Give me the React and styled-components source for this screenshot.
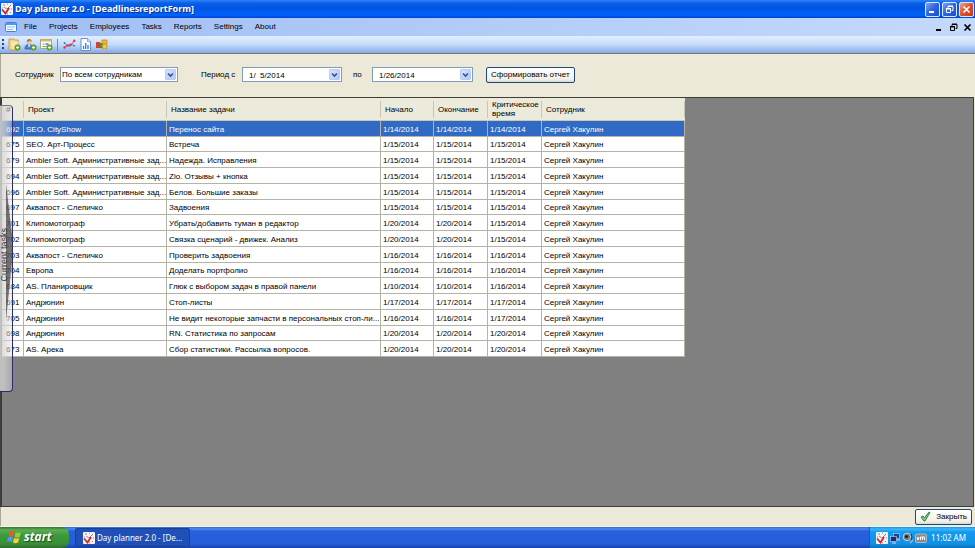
import React from "react";
import styled, { createGlobalStyle } from "styled-components";

const Global = createGlobalStyle`
  * { box-sizing: border-box; }
  html, body, #root { height: 100%; }
  body { margin: 0; overflow: hidden; }
  button, input, select { font: inherit; color: inherit; margin: 0; }
  svg { display: block; flex: none; }
`;

const Desktop = styled.div`
  position: relative;
  display: flex;
  flex-direction: column;
  height: 100%;
  font: 8px/12px "Liberation Sans", Arial, sans-serif;
  color: #000;
  background: #ece9d8;
`;

const TitleBar = styled.header`
  display: flex;
  align-items: center;
  gap: 2px;
  height: 18px;
  padding: 0 1px;
  background: linear-gradient(#2f86f8 0, #0a5fe8 3px, #0054e3 8px, #0062fb 15px, #0043d0 18px);
`;

const Title = styled.h1`
  flex: 1;
  margin: 0;
  color: #fff;
  font: bold 9px/16px "Noto Sans", "Open Sans", sans-serif;
  text-shadow: 1px 1px #0a2f8c;
`;

const WindowButton = styled.button`
  display: grid;
  place-items: center;
  width: 15px;
  height: 15px;
  padding: 0;
  border: 1px solid #dbe7ff;
  border-radius: 2px;
  background: ${(p) =>
    p.$close
      ? "linear-gradient(135deg, #f0a084, #e0502a 50%, #c83c14)"
      : "linear-gradient(135deg, #7ba2f2, #2f63de 50%, #1c4fcc)"};
`;

const ButtonSet = styled.div`
  display: flex;
  gap: ${(p) => p.$gap}px;
`;

const MenuBar = styled.nav`
  display: flex;
  align-items: center;
  height: 18px;
  padding: 0 3px 0 5px;
  background: linear-gradient(90deg, #a0bef5, #c4dafb);
`;

const MenuList = styled.div`
  display: flex;
  flex: 1;
  gap: 12px;
  padding-left: 7px;
`;

const MenuItem = styled.button`
  padding: 0;
  border: 0;
  background: none;
`;

const MdiButton = styled.button`
  display: grid;
  place-items: center;
  width: 9px;
  height: 12px;
  padding: 0;
  border: 0;
  background: none;
`;

const ToolBar = styled.div`
  display: flex;
  align-items: center;
  gap: 2px;
  height: 18px;
  padding: 0 2px;
  border-bottom: 1px solid #77766c;
  background: linear-gradient(#e3efff, #c5dcfb 50%, #84a9e4);
`;

const ToolButton = styled.button`
  display: grid;
  place-items: center;
  width: 14px;
  height: 14px;
  padding: 0;
  border: 0;
  background: none;
`;

const Grip = styled.span`
  width: 2px;
  height: 11px;
  margin-right: 1px;
  background: repeating-linear-gradient(#27418f 0 2px, transparent 2px 4px);
`;

const Separator = styled.span`
  width: 1px;
  height: 12px;
  margin: 0 2px;
  background: #6a8ccb;
`;

const Filters = styled.form`
  display: flex;
  align-items: center;
  height: 43px;
  padding: 0 15px 2px 14px;
  border-left: 1px solid #aaa79a;
`;

const FilterLabel = styled.label`
  width: ${(p) => p.$width}px;
  margin-left: ${(p) => p.$before}px;
  white-space: nowrap;
`;

const Field = styled.div`
  display: flex;
  align-items: center;
  width: ${(p) => p.$width}px;
  height: 15px;
  padding-right: 1px;
  border: 1px solid #7f9db9;
  background: #fff;
`;

const SelectInput = styled.select`
  flex: 1;
  min-width: 0;
  height: 13px;
  padding: 0 1px;
  border: 0;
  outline: 0;
  appearance: none;
  background: none;
`;

const DateInput = styled.input`
  flex: 1;
  min-width: 0;
  height: 13px;
  padding: 1px 0 0 6px;
  border: 0;
  outline: 0;
  background: none;
`;

const DropButton = styled.button`
  display: grid;
  place-items: center;
  width: 11px;
  height: 11px;
  padding: 0;
  border: 1px solid #b8cbf6;
  border-radius: 1px;
  background: linear-gradient(135deg, #d6e2fd, #b4c8f6);
`;

const PushButton = styled.button`
  display: flex;
  align-items: center;
  justify-content: center;
  gap: 5px;
  height: 16px;
  margin-left: ${(p) => p.$before || 0}px;
  padding: 0 4px;
  border: 1px solid #1c4a7c;
  border-radius: 2px;
  background: linear-gradient(#fff, #f1f0ea 80%, #dcd8cc);
`;

const Workspace = styled.main`
  flex: 1;
  min-height: 0;
  margin-right: 1px;
  overflow: hidden;
  border: solid #3f3d36;
  border-width: 1px 1px 1px 2px;
  background: #808080;
`;

const Grid = styled.table`
  width: 683px;
  border-collapse: separate;
  border-spacing: 0;
  table-layout: fixed;
  background: #fff;
`;

const Col = styled.col`
  width: ${(p) => p.$width}px;
`;

const HeadCell = styled.th`
  height: 23px;
  padding: 0 0 0 4px;
  border-bottom: 1px solid #cbc7b8;
  background: linear-gradient(#c9c6b8, #c9c6b8) right center / 1px 17px no-repeat #ebeadb;
  font-weight: normal;
  line-height: 9px;
  text-align: left;
`;

const Row = styled.tr`
  height: 16px;
  color: ${(p) => (p.$selected ? "#fff" : "inherit")};
  background: ${(p) => (p.$selected ? "#316ac5" : "#fff")};

  &:nth-child(4n + 2) {
    height: 15px;
  }
`;

const Cell = styled.td`
  padding: 1px 0 0 2px;
  border: solid #b5b3a4;
  border-width: 0 1px 1px 0;
  line-height: 13px;
  white-space: nowrap;

  &:first-child {
    padding-left: 4px;
  }
`;

const Footer = styled.footer`
  display: flex;
  align-items: center;
  justify-content: flex-end;
  height: 19px;
  padding-right: 3px;
  border-left: 1px solid #aaa79a;
`;

const SideTab = styled.button`
  position: absolute;
  top: 105px;
  left: 0;
  display: flex;
  align-items: center;
  width: 13px;
  height: 287px;
  padding: 12px 0 0;
  border: 1px solid #2c2c6c;
  border-left: 0;
  border-top-color: #77777c;
  border-radius: 0 4px 4px 0;
  background: linear-gradient(90deg, #d2d2d2e6, #e4e4e466);
`;

const SideLabel = styled.span`
  writing-mode: vertical-rl;
  transform: rotate(180deg);
  color: #333;
  font: 9px/9px "Liberation Sans", sans-serif;
`;

const Taskbar = styled.div`
  display: flex;
  align-items: stretch;
  height: 22px;
  border-top: 1px solid #f5f3ea;
  background: linear-gradient(#3168d5, #4a8bf0 2px, #2660dc 4px, #245edb 17px, #1941a5);
`;

const StartButton = styled.button`
  display: flex;
  align-items: center;
  gap: 2px;
  width: 69px;
  padding: 0 0 1px 7px;
  border: 0;
  border-radius: 0 7px 7px 0;
  color: #fff;
  font: italic bold 12px/16px "Open Sans", "Noto Sans", sans-serif;
  text-shadow: 1px 1px 1px #1a4a1a;
  background: linear-gradient(#2f7a2f, #5eac56 3px, #3c9a3c 8px, #388e38 17px, #2a6d2a);
`;

const TaskButton = styled.button`
  display: flex;
  align-items: center;
  gap: 2px;
  width: 115px;
  margin: 1px 0 1px 6px;
  padding: 0 7px;
  border: 1px solid #15409c;
  border-radius: 2px;
  color: #fff;
  font: 8px/12px "Noto Sans", sans-serif;
  white-space: nowrap;
  background: #1e50b8;
`;

const Tray = styled.div`
  display: flex;
  align-items: center;
  gap: 1px;
  margin-left: auto;
  padding: 0 9px 0 6px;
  border-left: 1px solid #0d5fb5;
  color: #fff;
  font: 8px/12px "Noto Sans", sans-serif;
  background: linear-gradient(#1290e9, #3db8f8 2px, #139aee 5px, #1190e4 17px, #0d6fb8);
`;

const Clock = styled.time`
  margin-left: 3px;
`;

function AppLogo({ size = 12 }) {
  return (
    <svg width={size} height={size} viewBox="0 0 12 12">
      <rect width="12" height="12" rx="1" fill="#f4f4f6" />
      <path d="M2 2h2M6 1h1M9 2l1 1M1 5h1M10 6h1M9 9l1 1M6 11h1" stroke="#888" />
      <path d="M6 6 10 2M6 6 3 4" stroke="#777" strokeWidth=".8" />
      <path d="M1 6.500 4.500 10.500 8 5" fill="none" stroke="#e01c1c" strokeWidth="1.700" />
    </svg>
  );
}

function FormIcon() {
  return (
    <svg width="12" height="12" viewBox="0 0 12 12">
      <rect x=".5" y="1.500" width="11" height="9" rx="1" fill="#f8fbff" stroke="#3b81dd" />
      <path d="M1 3h10" stroke="#4b9af0" strokeWidth="2" />
      <path d="M2 6h8M2 8.500h6" stroke="#8fb6e8" />
    </svg>
  );
}

function AddBadge() {
  return (
    <g>
      <circle cx="9.500" cy="9.500" r="2.700" fill="#6cab25" stroke="#4b841a" strokeWidth=".6" />
      <path d="M8 9.500h3M9.500 8v3" stroke="#fff" strokeWidth="1.100" />
    </g>
  );
}

function ToolIcon({ kind }) {
  return (
    <svg width="13" height="13" viewBox="0 0 13 13">
      {kind === "project" && (
        <>
          <path d="M1 1h5l1 1h3v10H2L1 11z" fill="#f5d185" stroke="#c59438" strokeWidth=".8" />
          <path d="M3 3.500h7V11H4z" fill="#fae5ac" />
          <AddBadge />
        </>
      )}
      {kind === "employee" && (
        <>
          <path d="M1 11c0-4 2-4.500 4-4.500S9 7 9 11z" fill="#4b86d2" stroke="#2c5a9c" strokeWidth=".7" />
          <path d="M4 6.500h2.500L5 9.500z" fill="#fff" />
          <circle cx="5.300" cy="4" r="2.300" fill="#f1c48d" />
          <path d="M2.800 4C2.500 0 8 0 7.800 4L6.500 2.500z" fill="#a36f2c" />
          <AddBadge />
        </>
      )}
      {kind === "task" && (
        <>
          <rect x=".5" y="1.500" width="11" height="9" fill="#fbfbf5" stroke="#a7a78d" />
          <path d="M1 2.500h10" stroke="#e3b75a" strokeWidth="2" />
          <path d="M2.500 6h2M2.500 8.500h4" stroke="#7eae55" />
          <path d="M5.500 6h3" stroke="#69a2dd" strokeWidth="2" />
          <AddBadge />
        </>
      )}
      {kind === "lines" && (
        <>
          <path d="m1 4 3 4 3-2 5 2" fill="none" stroke="#6485c4" />
          <path d="m1 10 3-2.500L7 8l5-6" fill="none" stroke="#d9363c" strokeWidth="1" />
          <g fill="#df3c42">
            <circle cx="1.500" cy="9.500" r="1.200" />
            <circle cx="4.500" cy="7.500" r="1.200" />
            <circle cx="7.500" cy="7" r="1.200" />
            <circle cx="11.300" cy="2.700" r="1.200" />
          </g>
          <g fill="#4a74c2">
            <circle cx="1.500" cy="5" r=".9" />
            <circle cx="11" cy="7.600" r=".9" />
          </g>
        </>
      )}
      {kind === "bars" && (
        <>
          <path d="M2 .5h6.500l3 3v9H2z" fill="#f8fbff" stroke="#6c91c8" />
          <path d="M8.500.5v3h3" fill="#d7e6fa" stroke="#6c91c8" strokeWidth=".7" />
          <path d="M4.500 11V8M6.700 11V5M9 11V7" stroke="#3c7bd0" strokeWidth="1.300" />
        </>
      )}
      {kind === "parts" && (
        <>
          <path d="M1 4h4v6H1z" fill="#d8402b" />
          <path d="M5 5h3v5H5z" fill="#43923a" />
          <path d="M7 2h5v4H7z" fill="#f3b92d" stroke="#b7801b" strokeWidth=".7" />
          <path d="m9.500 5.500 1 1.800 2 .2-1.400 1.500.400 2.200-2-1-2 1 .4-2.200L6.500 7.500l2-.2z" fill="#ffd04a" stroke="#d78d14" strokeWidth=".8" />
        </>
      )}
    </svg>
  );
}

function Glyph({ kind, color = "#fff" }) {
  return (
    <svg width="9" height="9" viewBox="0 0 9 9" fill="none" stroke={color}>
      {kind === "min" && <path d="M1 7h5" strokeWidth="2" />}
      {kind === "restore" && (
        <>
          <path d="M3 3V1.500h5V5.500H6.500M3 1h5" />
          <path d="M1.500 4h4v3.500h-4zM1 3.500h5" />
        </>
      )}
      {kind === "close" && <path d="m1.500 1.500 6 6m0-6-6 6" strokeWidth="1.700" />}
    </svg>
  );
}

function Chevron() {
  return (
    <svg width="7" height="6" viewBox="0 0 7 6">
      <path d="M1 1.500 3.500 4 6 1.500" fill="none" stroke="#34528c" strokeWidth="1.600" />
    </svg>
  );
}

function CheckIcon() {
  return (
    <svg width="11" height="11" viewBox="0 0 11 11">
      <path d="m1 6 2-1 1.500 2L9 1l1 .500L5 10H4z" fill="#7cd080" stroke="#237a35" strokeWidth=".9" />
    </svg>
  );
}

function Flag() {
  return (
    <svg width="15" height="14" viewBox="0 0 13 12">
      <path d="M2.500 1.500q2-1.300 4.200 0L5.600 5.500Q3.500 4.300 1.300 5.500z" fill="#f0562a" />
      <path d="M7.500 1.900q2 1.200 4.700 0L11 6q-2.300 1-4.500 0z" fill="#8fd03c" />
      <path d="M1.100 6.300q2.200-1.200 4.200 0l-1.100 4q-2-1.200-4.200 0z" fill="#5a95f5" />
      <path d="M6.200 6.800q2.200 1.200 4.600 0l-1.200 4q-2.200 1.200-4.500 0z" fill="#fccf2c" />
    </svg>
  );
}

function TrayIcon({ kind }) {
  return (
    <svg width="12" height="12" viewBox="0 0 12 12">
      {kind === "network" && (
        <>
          <rect x="4.500" y="1.500" width="6" height="5" fill="#263e93" stroke="#c5d6f5" strokeWidth=".6" />
          <rect x="1.500" y="4.500" width="6" height="5" fill="#1a2d78" stroke="#c5d6f5" strokeWidth=".6" />
          <path d="M3 11h4M8 8h3" stroke="#ccd8f0" />
        </>
      )}
      {kind === "sound" && (
        <>
          <circle cx="5" cy="5" r="3.800" fill="#777" stroke="#d8d8d8" strokeWidth=".9" />
          <circle cx="4.500" cy="4.500" r="1.600" fill="#222" />
          <path d="M9 2q2 3 0 6" fill="none" stroke="#333" />
          <path d="m8 11 3-3" stroke="#8fb9ff" strokeWidth="1.500" />
        </>
      )}
      {kind === "vm" && (
        <>
          <rect x=".5" y="2" width="11" height="8.500" rx="1" fill="#8a8a88" stroke="#ddd" strokeWidth=".6" />
          <path d="m2 5 1 3 1.200-3M5.500 8V5h4v3M7.500 5v3" fill="none" stroke="#fff" />
        </>
      )}
    </svg>
  );
}

const Shade = styled.svg`
  position: absolute;
  top: 78px;
  left: 6px;
`;

const menus = ["File", "Projects", "Employees", "Tasks", "Reports", "Settings", "About"];

const columns = [
  ["#", 22],
  ["Проект", 143],
  ["Название задачи", 214],
  ["Начало", 53],
  ["Окончание", 54],
  ["Критическое время", 54],
  ["Сотрудник", 143],
];

const ambler = "Ambler Soft. Административные зад...";
const tasks = [
  [692, "SEO. CityShow", "Перенос сайта", "1/14/2014", "1/14/2014", "1/14/2014"],
  [675, "SEO. Арт-Процесс", "Встреча", "1/15/2014", "1/15/2014", "1/15/2014"],
  [679, ambler, "Надежда. Исправления", "1/15/2014", "1/15/2014", "1/15/2014"],
  [694, ambler, "Zio. Отзывы + кнопка", "1/15/2014", "1/15/2014", "1/15/2014"],
  [696, ambler, "Белов. Большие заказы", "1/15/2014", "1/15/2014", "1/15/2014"],
  [697, "Аквапост - Слепичко", "Задвоения", "1/15/2014", "1/15/2014", "1/15/2014"],
  [701, "Клипомотограф", "Убрать/добавить туман в редактор", "1/20/2014", "1/20/2014", "1/15/2014"],
  [702, "Клипомотограф", "Связка сценарий - движек. Анализ", "1/20/2014", "1/20/2014", "1/15/2014"],
  [703, "Аквапост - Слепичко", "Проверить задвоения", "1/16/2014", "1/16/2014", "1/16/2014"],
  [704, "Европа", "Доделать портфолио", "1/16/2014", "1/16/2014", "1/16/2014"],
  [684, "AS. Планировщик", "Глюк с выбором задач в правой панели", "1/10/2014", "1/10/2014", "1/16/2014"],
  [691, "Андрюнин", "Стоп-листы", "1/17/2014", "1/17/2014", "1/17/2014"],
  [705, "Андрюнин", "Не видит некоторые запчасти в персональных стоп-ли...", "1/16/2014", "1/16/2014", "1/17/2014"],
  [698, "Андрюнин", "RN. Статистика по запросам", "1/20/2014", "1/20/2014", "1/20/2014"],
  [673, "AS. Арека", "Сбор статистики. Рассылка вопросов.", "1/20/2014", "1/20/2014", "1/20/2014"],
];

function DateField({ id, value, width }) {
  return (
    <Field $width={width}>
      <DateInput id={id} type="text" defaultValue={value} />
      <DropButton type="button" aria-label="Open calendar">
        <Chevron />
      </DropButton>
    </Field>
  );
}

export default function App() {
  return (
    <Desktop>
      <Global />
      <TitleBar>
        <AppLogo />
        <Title>Day planner 2.0 - [DeadlinesreportForm]</Title>
        <ButtonSet $gap={2}>
          <WindowButton aria-label="Minimize"><Glyph kind="min" /></WindowButton>
          <WindowButton aria-label="Restore"><Glyph kind="restore" /></WindowButton>
          <WindowButton $close aria-label="Close"><Glyph kind="close" /></WindowButton>
        </ButtonSet>
      </TitleBar>

      <MenuBar>
        <FormIcon />
        <MenuList>
          {menus.map((name) => <MenuItem key={name}>{name}</MenuItem>)}
        </MenuList>
        <ButtonSet $gap={5}>
          <MdiButton aria-label="Minimize form"><Glyph kind="min" color="#000" /></MdiButton>
          <MdiButton aria-label="Restore form"><Glyph kind="restore" color="#000" /></MdiButton>
          <MdiButton aria-label="Close form"><Glyph kind="close" color="#000" /></MdiButton>
        </ButtonSet>
      </MenuBar>

      <ToolBar>
        <Grip />
        <ToolButton aria-label="Add project"><ToolIcon kind="project" /></ToolButton>
        <ToolButton aria-label="Add employee"><ToolIcon kind="employee" /></ToolButton>
        <ToolButton aria-label="Add task"><ToolIcon kind="task" /></ToolButton>
        <Separator />
        <ToolButton aria-label="Line report"><ToolIcon kind="lines" /></ToolButton>
        <ToolButton aria-label="Bar report"><ToolIcon kind="bars" /></ToolButton>
        <ToolButton aria-label="Summary report"><ToolIcon kind="parts" /></ToolButton>
      </ToolBar>

      <Filters onSubmit={(e) => e.preventDefault()}>
        <FilterLabel htmlFor="employee" $before={0} $width={45}>Сотрудник</FilterLabel>
        <Field $width={118}>
          <SelectInput id="employee">
            <option>По всем сотрудникам</option>
          </SelectInput>
          <DropButton type="button" aria-label="Open employee list"><Chevron /></DropButton>
        </Field>
        <FilterLabel htmlFor="from" $before={23} $width={41}>Период с</FilterLabel>
        <DateField id="from" value="1/  5/2014" width={100} />
        <FilterLabel htmlFor="to" $before={11} $width={19}>по</FilterLabel>
        <DateField id="to" value="1/26/2014" width={101} />
        <PushButton type="submit" $before={13}>Сформировать отчет</PushButton>
      </Filters>

      <Workspace>
        <Grid>
          <colgroup>
            {columns.map(([name, width]) => <Col key={name} $width={width} />)}
          </colgroup>
          <thead>
            <tr>
              {columns.map(([name]) => <HeadCell key={name} scope="col">{name}</HeadCell>)}
            </tr>
          </thead>
          <tbody>
            {tasks.map((task, i) => (
              <Row key={task[0]} $selected={i === 0}>
                {task.map((value, j) => <Cell key={j}>{value}</Cell>)}
                <Cell>Сергей Хакулин</Cell>
              </Row>
            ))}
          </tbody>
        </Grid>
      </Workspace>

      <Footer>
        <PushButton type="button"><CheckIcon />Закрыть</PushButton>
      </Footer>

      <Taskbar>
        <StartButton><Flag />start</StartButton>
        <TaskButton><AppLogo />Day planner 2.0 - [De...</TaskButton>
        <Tray>
          <AppLogo />
          <TrayIcon kind="network" />
          <TrayIcon kind="sound" />
          <TrayIcon kind="vm" />
          <Clock>11:02 AM</Clock>
        </Tray>
      </Taskbar>

      <SideTab>
        <Shade width="6" height="136" viewBox="0 0 6 136" aria-hidden="true">
          <path d="M0 0 6 50V78L0 136z" fill="#222" opacity=".6" />
        </Shade>
        <SideLabel>Current tasks</SideLabel>
      </SideTab>
    </Desktop>
  );
}
